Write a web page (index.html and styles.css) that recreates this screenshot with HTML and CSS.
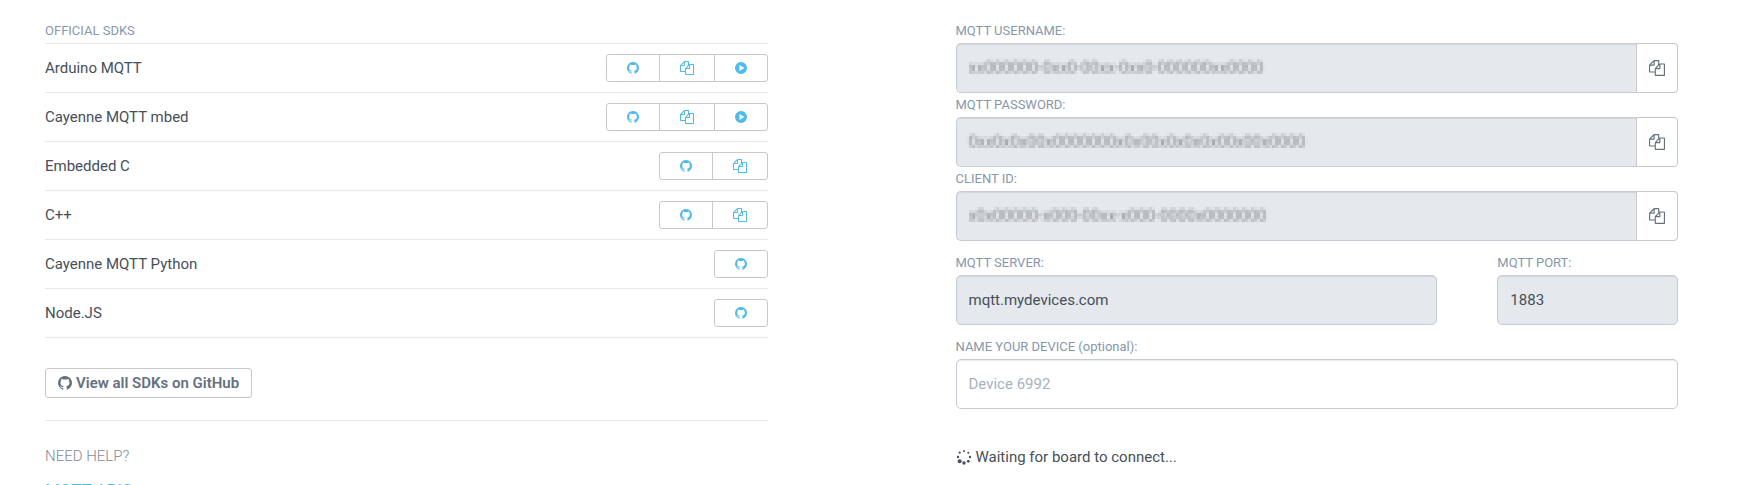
FILE: index.html
```
<!DOCTYPE html>
<html lang="en">
<head>
<meta charset="utf-8">
<title>Connect your board</title>
<link rel="stylesheet" href="styles.css">
</head>
<body>
<svg class="defs" aria-hidden="true">
  <filter id="mosaic" x="0" y="0" width="100%" height="100%" color-interpolation-filters="sRGB">
    <feGaussianBlur in="SourceGraphic" stdDeviation="1" result="soft"/>
    <feFlood x="1" y="1" width="1" height="1" flood-color="#000"/>
    <feComposite x="0" y="0" width="3" height="3"/>
    <feTile result="dots"/>
    <feComposite in="soft" in2="dots" operator="in"/>
    <feMorphology operator="dilate" radius="1"/>
  </filter>
  <symbol id="github" viewBox="0 0 1536 1536"><path d="M1536 768q0 251-146.500 451.500t-378.500 277.500q-27 5-40-7t-13-30q0-3 .5-76.500t.5-134.500q0-97-52-142 57-6 102.500-18t94-39 81-66.500 53-105 20.500-150.500q0-119-79-206 37-91-8-204-28-9-81 11t-92 44l-38 24q-93-26-192-26t-192 26q-16-11-42.500-27t-83.500-38.500-85-13.500q-45 113-8 204-79 87-79 206 0 85 20.500 150t52.500 105 80.500 67 94 39 102.500 18q-39 36-49 103-21 10-45 15t-57 5-65.500-21.500-55.500-62.500q-19-32-48.500-52t-49.500-24l-20-3q-21 0-29 4.500t-5 11.500 9 14 13 12l7 5q22 10 43.500 38t31.500 51l10 23q13 38 44 61.500t67 30 69.500 7 55.500-3.500l23-4q0 38 .5 88.500t.5 54.500q0 18-13 30t-40 7q-232-77-378.500-277.500t-146.500-451.500q0-209 103-385.500t279.500-279.500 385.500-103 385.500 103 279.500 279.500 103 385.500z"/></symbol>
  <symbol id="copy" viewBox="0 0 1792 1792"><path d="M1696 384q40 0 68 28t28 68v1216q0 40-28 68t-68 28h-960q-40 0-68-28t-28-68v-288h-544q-40 0-68-28t-28-68v-672q0-40 20-88t48-76l408-408q28-28 76-48t88-20h416q40 0 68 28t28 68v328q68-40 128-40h416zm-544 213l-299 299h299v-299zm-640-384l-299 299h299v-299zm196 647l316-316v-416h-384v416q0 40-28 68t-68 28h-416v640h512v-256q0-40 20-88t48-76zm956 804v-1152h-384v416q0 40-28 68t-68 28h-416v640h896z"/></symbol>
  <symbol id="play" viewBox="0 0 16 16"><path fill-rule="evenodd" d="M8 0a8 8 0 1 0 0 16A8 8 0 0 0 8 0zM6 4l6.500 4L6 12z"/></symbol>
</svg>
<main class="page">
  <section class="sdks">
    <h2 class="caption">OFFICIAL SDKS</h2>
    <ul class="sdk-list">
      <li class="sdk"><span>Arduino MQTT</span><div class="group"><button class="btn" aria-label="GitHub"><svg class="ico"><use href="#github"/></svg></button><button class="btn" aria-label="Copy"><svg class="ico wide"><use href="#copy"/></svg></button><button class="btn" aria-label="Play"><svg class="ico"><use href="#play"/></svg></button></div></li>
      <li class="sdk"><span>Cayenne MQTT mbed</span><div class="group"><button class="btn" aria-label="GitHub"><svg class="ico"><use href="#github"/></svg></button><button class="btn" aria-label="Copy"><svg class="ico wide"><use href="#copy"/></svg></button><button class="btn" aria-label="Play"><svg class="ico"><use href="#play"/></svg></button></div></li>
      <li class="sdk"><span>Embedded C</span><div class="group"><button class="btn" aria-label="GitHub"><svg class="ico"><use href="#github"/></svg></button><button class="btn" aria-label="Copy"><svg class="ico wide"><use href="#copy"/></svg></button></div></li>
      <li class="sdk"><span>C++</span><div class="group"><button class="btn" aria-label="GitHub"><svg class="ico"><use href="#github"/></svg></button><button class="btn" aria-label="Copy"><svg class="ico wide"><use href="#copy"/></svg></button></div></li>
      <li class="sdk"><span>Cayenne MQTT Python</span><div class="group"><button class="btn" aria-label="GitHub"><svg class="ico"><use href="#github"/></svg></button></div></li>
      <li class="sdk"><span>Node.JS</span><div class="group"><button class="btn" aria-label="GitHub"><svg class="ico"><use href="#github"/></svg></button></div></li>
    </ul>
    <div class="all">
      <button class="view-all"><svg class="ico wide"><use href="#github"/></svg>View all SDKs on GitHub</button>
    </div>
    <h3 class="help">NEED HELP?</h3>
    <a class="help-link" href="#">MQTT APIS</a>
  </section>
  <form class="settings">
    <div class="field">
      <label class="caption" for="user">MQTT USERNAME:</label>
      <div class="box filled joined"><input id="user" class="input hidden-value" readonly value="xx000000-0xx0-00xx-0xx0-000000xx0000"><button type="button" class="copy" aria-label="Copy username"><svg class="ico big"><use href="#copy"/></svg></button></div>
    </div>
    <div class="field">
      <label class="caption" for="pass">MQTT PASSWORD:</label>
      <div class="box filled joined"><input id="pass" class="input hidden-value" readonly value="0xx0x0x00x0000000x0x00x0x0x0x00x00x0000"><button type="button" class="copy" aria-label="Copy password"><svg class="ico big"><use href="#copy"/></svg></button></div>
    </div>
    <div class="field">
      <label class="caption" for="client">CLIENT ID:</label>
      <div class="box filled joined"><input id="client" class="input hidden-value" readonly value="x0x00000-x000-00xx-x000-0000x0000000"><button type="button" class="copy" aria-label="Copy client ID"><svg class="ico big"><use href="#copy"/></svg></button></div>
    </div>
    <div class="server-row">
      <div class="field">
        <label class="caption" for="server">MQTT SERVER:</label>
        <div class="box filled"><input id="server" class="input" readonly value="mqtt.mydevices.com"></div>
      </div>
      <div class="field port">
        <label class="caption" for="port">MQTT PORT:</label>
        <div class="box filled"><input id="port" class="input" readonly value="1883"></div>
      </div>
    </div>
    <div class="field name">
      <label class="caption" for="device">NAME YOUR DEVICE (optional):</label>
      <div class="box"><input id="device" class="input" placeholder="Device 6992"></div>
    </div>
    <p class="waiting"><svg class="spinner" viewBox="0 0 16 16" aria-hidden="true"><circle cx="8" cy="2" r="1"/><circle cx="12.300" cy="3.700" r="1"/><circle cx="14" cy="8" r="1.200"/><circle cx="12.300" cy="12.300" r="1.400"/><circle cx="8" cy="14" r="1.700"/><circle cx="3.700" cy="12.300" r="2"/><circle cx="2" cy="8" r="1.200"/><circle cx="3.700" cy="3.700" r="1.100"/></svg>Waiting for board to connect...</p>
  </form>
</main>
</body>
</html>
```
FILE: styles.css
```
* { box-sizing: border-box; }
html { overflow: hidden; }
body {
  margin: 0;
  background: #fff;
  color: #464f5b;
  font: 15px/24px Roboto, "Open Sans", sans-serif;
}
button, input { font: inherit; color: inherit; }
.defs { position: absolute; width: 0; height: 0; }
.page {
  display: grid;
  grid-template-columns: 1fr 1fr;
  gap: 188px;
  padding: 19px 63px 0 45px;
}
.caption {
  display: block;
  margin: 0;
  color: #8797ab;
  font-size: 13px;
  font-weight: 400;
  line-height: 24px;
}
.sdk-list { list-style: none; margin: 0; padding: 0; border-top: 1px solid #e5e8ed; }
.sdk {
  display: flex;
  align-items: center;
  justify-content: space-between;
  height: 49px;
  border-bottom: 1px solid #e5e8ed;
}
.group { display: flex; }
.btn {
  display: flex;
  align-items: center;
  justify-content: center;
  height: 28px;
  padding: 0 20px;
  border: 1px solid #c8c8c8;
  background: #fff;
  color: #4ebbe8;
}
.btn + .btn { margin-left: -1px; }
.btn:first-child { border-radius: 3px 0 0 3px; }
.btn:last-child { border-radius: 0 3px 3px 0; }
.btn:only-child { border-radius: 3px; }
.ico { display: block; width: 12px; height: 12px; fill: currentColor; }
.wide { width: 14px; height: 14px; }
.big { width: 16px; height: 16px; }
.all { padding: 30px 0 22px; border-bottom: 1px solid #e5e8ed; }
.view-all {
  display: flex;
  align-items: center;
  gap: 4px;
  height: 30px;
  padding: 0 12px;
  border: 1px solid #c8c8c8;
  border-radius: 3px;
  background: #fff;
  color: #657080;
  font-size: 15px;
  font-weight: 600;
}
.help { margin: 23px 0 10px; color: #7f8a98; font-size: 15px; font-weight: 300; line-height: 24px; }
.help-link { color: #4ebbe8; font-size: 17px; text-decoration: none; }
.box {
  display: flex;
  height: 50px;
  border: 1px solid #c6cbd6;
  border-radius: 5px;
  background: #fff;
  box-shadow: inset 0 1px 1px rgba(0, 0, 0, 0.08);
}
.filled { background: #e5e8ed; }
.input {
  flex: 1;
  min-width: 0;
  padding: 0 12px;
  border: 0;
  outline: 0;
  background: transparent;
}
.input::placeholder { color: #a9b1bf; opacity: 1; }
.hidden-value { color: #85898f; font-size: 16px; filter: url(#mosaic); }
.joined { border-right: 0; }
.copy {
  display: flex;
  align-items: center;
  justify-content: center;
  width: 42px;
  margin: -1px 0;
  padding: 0;
  border: 1px solid #c8c8c8;
  border-radius: 0 4px 4px 0;
  background: #fff;
  color: #657080;
}
.server-row {
  display: grid;
  grid-template-columns: minmax(0, 8fr) minmax(0, 1fr) minmax(0, 3fr);
  margin: 10px 0;
}
.port { grid-column: 3; }
.waiting { display: flex; align-items: center; gap: 4px; margin: 36px 0 0; }
.spinner { width: 16px; height: 16px; fill: #464f5b; }
```
